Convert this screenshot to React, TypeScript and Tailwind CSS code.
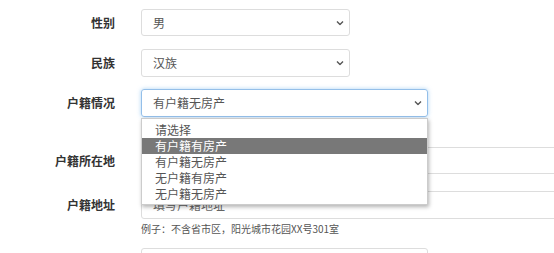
const font = { fontFamily: '"Noto Sans CJK SC", "Noto Sans", sans-serif' };

const Chevron = () => (
  <svg width="8" height="5" viewBox="0 0 8 5" className="absolute right-[5px] top-1/2 -translate-y-1/2">
    <path d="M1 1l3 3 3-3" fill="none" stroke="#555" strokeWidth="1.4" />
  </svg>
);

const options = ["请选择", "有户籍有房产", "有户籍无房产", "无户籍有房产", "无户籍无房产"];

function Label({ children }: { children: React.ReactNode }) {
  return (
    <div className="w-[115px] shrink-0 text-right text-[12px] font-bold text-[#333]">{children}</div>
  );
}

export default function App() {
  return (
    <div className="relative h-[253px] w-[554px] overflow-hidden bg-white" style={font}>
      <div className="flex flex-col pt-[9px]">
        {/* 性别 */}
        <div className="flex items-center gap-[26px]">
          <Label>性别</Label>
          <div className="relative flex h-[27px] w-[209px] items-center rounded-[3px] border border-[#ddd] pl-[11px] text-[12px] text-[#555]">
            男
            <Chevron />
          </div>
        </div>

        {/* 民族 */}
        <div className="mt-[13px] flex items-center gap-[26px]">
          <Label>民族</Label>
          <div className="relative flex h-[28px] w-[209px] items-center rounded-[3px] border border-[#ddd] pl-[11px] text-[12px] text-[#555]">
            汉族
            <Chevron />
          </div>
        </div>

        {/* 户籍情况 */}
        <div className="mt-[12px] flex items-center gap-[26px]">
          <Label>户籍情况</Label>
          <div className="relative flex h-[28px] w-[287px] items-center rounded-[3px] border border-[#94bfe9] pl-[11px] text-[12px] text-[#555] shadow-[0_0_4px_rgba(102,175,233,0.55)]">
            有户籍无房产
            <Chevron />
          </div>
        </div>

        {/* 户籍所在地 */}
        <div className="mt-[30px] flex items-center gap-[26px]">
          <Label>户籍所在地</Label>
          <div className="h-[27px] w-[500px] shrink-0 rounded-[3px] border border-[#ddd]" />
        </div>

        {/* 户籍地址 */}
        <div className="mt-[17px] flex items-center gap-[26px]">
          <Label>户籍地址</Label>
          <div className="flex h-[28px] w-[500px] shrink-0 items-center rounded-[3px] border border-[#ddd] pl-[11px] text-[12px] text-[#666]">
            填写户籍地址
          </div>
        </div>
        <div className="ml-[141px] mt-[3px] text-[10px] leading-[14px] text-[#555]">
          例子：不含省市区，阳光城市花园XX号301室
        </div>

        <div className="ml-[141px] mt-[12px] h-[28px] w-[287px] rounded-[3px] border border-[#ddd]" />
      </div>

      {/* 下拉列表 */}
      <div className="absolute left-[141px] top-[118px] w-[287px] border border-[#ccc] bg-white pb-[2px] pt-[3px] shadow-[1px_2px_4px_rgba(0,0,0,0.3)]">
        {options.map((o, i) => (
          <div
            key={o}
            className={
              i === 1
                ? "h-[16px] bg-[#787878] pl-[13px] text-[12px] leading-[16px] text-white"
                : "h-[16px] pl-[13px] text-[12px] leading-[16px] text-[#555]"
            }
          >
            {o}
          </div>
        ))}
      </div>
    </div>
  );
}
